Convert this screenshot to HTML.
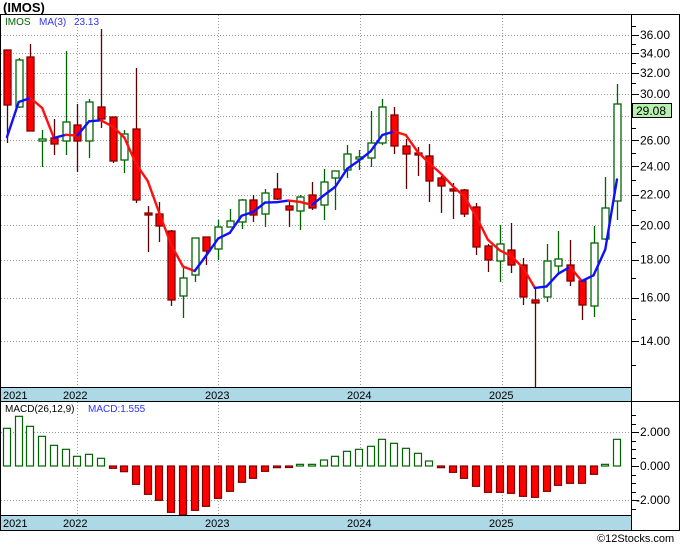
<!DOCTYPE html>
<html><head><meta charset="utf-8"><style>
body{margin:0;background:#fff;width:680px;height:546px;overflow:hidden;font-family:"Liberation Sans",sans-serif}
svg{position:absolute;left:0;top:0}
text{font-family:"Liberation Sans",sans-serif}
</style></head><body>
<svg id="s" width="680" height="546" xmlns="http://www.w3.org/2000/svg">
<rect x="0" y="0" width="680" height="546" fill="#fff"/>
<g id="grid" stroke="#999" stroke-dasharray="1,2" stroke-width="1"></g>
<rect x="1" y="387" width="630.5" height="14" fill="#add8e6"/>
<rect x="1" y="515" width="630.5" height="15" fill="#add8e6"/>
<g id="c"></g>
<g id="m"></g>
<g id="ax" stroke="#000" stroke-width="1"></g>
<line x1="0.5" y1="14.5" x2="679.5" y2="14.5" stroke="#000"/>
<line x1="0.5" y1="14" x2="0.5" y2="530" stroke="#000"/>
<line x1="679.5" y1="14" x2="679.5" y2="530" stroke="#000"/>
<line x1="631.5" y1="14" x2="631.5" y2="530" stroke="#000"/>
<line x1="0" y1="401.5" x2="680" y2="401.5" stroke="#000"/>
<line x1="0" y1="387.5" x2="632" y2="387.5" stroke="#000"/>
<line x1="0" y1="515.5" x2="632" y2="515.5" stroke="#000"/>
<line x1="0" y1="530.5" x2="680" y2="530.5" stroke="#000"/>
<text x="3" y="12" font-size="13" font-weight="bold" fill="#000">(IMOS)</text>
<text x="5" y="25" font-size="10" fill="#006400">IMOS</text>
<text x="39" y="25" font-size="10" fill="#3030ff">MA(3)</text>
<text x="74" y="25" font-size="10" fill="#3030ff">23.13</text>
<text x="5" y="412" font-size="10" fill="#000">MACD(26,12,9)</text>
<text x="88" y="412" font-size="10" fill="#3030ff">MACD:1.555</text>
<g font-size="11" fill="#000">
<text x="3" y="399">2021</text><text x="63" y="399">2022</text><text x="205" y="399">2023</text><text x="347" y="399">2024</text><text x="489" y="399">2025</text>
<text x="3" y="527">2021</text><text x="63" y="527">2022</text><text x="205" y="527">2023</text><text x="347" y="527">2024</text><text x="489" y="527">2025</text>
</g>
<g id="lab" font-size="12" fill="#000"></g>
<g font-size="12" fill="#000">
<text x="640" y="436">2.000</text><text x="640" y="470">0.000</text><text x="636" y="504">-2.000</text>
</g>
<rect x="632.5" y="103.5" width="39" height="14" fill="#b8f0b0" stroke="#000"/>
<text x="636" y="115" font-size="12" fill="#000">29.08</text>
<text x="597" y="542" font-size="11" fill="#000">©12Stocks.com</text>
</svg>
<script>
var NS="http://www.w3.org/2000/svg";
function el(p,t,a){var e=document.createElementNS(NS,t);for(var k in a)e.setAttribute(k,a[k]);document.getElementById(p).appendChild(e);return e;}
function Y(p){return 1196-324*Math.log(p);}
[36,34,32,30,28,26,24,22,20,18,16,14].forEach(function(p){var y=Math.round(Y(p))+.5;el("grid","line",{x1:1,x2:631,y1:y,y2:y});});
[77,218,360,502].forEach(function(x){el("grid","line",{x1:x+.5,x2:x+.5,y1:15,y2:387});el("grid","line",{x1:x+.5,x2:x+.5,y1:402,y2:515});});
[432,500].forEach(function(y){el("grid","line",{x1:1,x2:631,y1:y+.5,y2:y+.5});});
[36,34,32,30,26,24,22,20,18,16,14].forEach(function(p){var t=el("lab","text",{x:640,y:Y(p)+4});t.textContent=p.toFixed(2);});
for(var p=13;p<=37;p++){var y=Math.round(Y(p))+.5;if(y>16&&y<387)el("ax","line",{x1:631,x2:(p%2==0?639:636),y1:y,y2:y});}
for(var v=-3;v<=3;v+=0.5){var y=Math.round(466-17*v)+.5;if(y>402&&y<515)el("ax","line",{x1:631,x2:(v%2==0?639:636),y1:y,y2:y});}
var C=[[50,105,50,143,0],[60,107,58,108,1],[57,131,44,131,0],[139,141,130,167,1],[138,144,119,155,0],[122,141,51,155,1],[125,141,104,172,0],[102,141,99,158,1],[107,119,29,128,0],[117,161,117,163,0],[134,160,130,173,1],[129,200,68,203,0],
[213,215,206,252,0],[214,226,202,242,0],[231,300,230,306,0],[278,296,268,318,1],[238,275,238,282,1],[237,251,237,265,0],[227,249,220,260,1],[221,227,209,227,1],[200,222,199,229,1],[200,215,195,222,0],[193,214,189,227,1],[189,199,173,200,0],[206,210,201,227,0],[197,211,195,230,1],[195,208,182,210,0],[182,205,169,220,1],[171,178,171,210,1],[154,170,145,178,1],[157,159,150,170,1],
[143,158,111,167,1],[107,143,99,145,1],[115,146,107,154,0],[146,154,139,189,0],[153,155,147,176,0],[156,181,144,202,0],[178,186,176,213,0],[189,191,183,219,0],[190,214,189,217,0],[207,247,203,255,0],[246,260,244,272,0],[244,261,225,282,1],[250,265,223,273,0],[265,297,258,305,0],[300,303,287,387,0],[261,297,244,302,1],[259,266,231,275,1],[265,281,240,286,0],[281,305,281,320,0],[243,306,226,317,1],[208,239,177,240,1],[104,201,84,220,1]];
var closes=[];
C.forEach(function(c,i){var x=Math.round(7+11.73*i)+.5;var g=c[4];
el("c","line",{x1:x,x2:x,y1:c[2],y2:c[3],stroke:g?"#006400":"#600000","stroke-width":1.3});
var h=Math.max(c[1]-c[0],1.5);
el("c","rect",{x:x-3.5,y:c[0],width:7,height:h,fill:g?"#fff":"#ff0000",stroke:g?"#006400":"#800000","stroke-width":1.3});
closes.push(g?c[0]:c[1]);});
var ma=[];for(var i=0;i<closes.length;i++){var s=0,n=0;for(var j=Math.max(0,i-2);j<=i;j++){s+=Math.exp((1196-closes[j])/324);n++;}ma.push(Y(s/n));}
ma[0]=137;ma[1]=102;ma[2]=98;ma[3]=108;
for(var i=1;i<ma.length;i++){var x0=7+11.73*(i-1),x1=7+11.73*i;el("m","line",{x1:x0,y1:ma[i-1],x2:x1,y2:ma[i],stroke:ma[i]<ma[i-1]?"#1010ff":"#ff1010","stroke-width":2.4,"stroke-linecap":"round"});}
var M=[175,139,169,199,226,238,259,253,265,295,305,343,373,391,427,435,421,409,385,364,337,325,304,293,291,283,283,270,259,244,238,229,208,220,235,250,273,293,307,325,349,367,367,370,379,382,364,346,340,340,313,283,208];
M.forEach(function(z,i){var x=Math.round(7+11.73*i)-3.5;var y=370+z/3;var g=y<466;
var top=g?y:466,h=Math.max(Math.abs(y-466),1.5);
el("c","rect",{x:x,y:top,width:7,height:h,fill:g?"#fff":"#ff0000",stroke:g?"#006400":"#800000","stroke-width":1.2});});
</script>
</body></html>
